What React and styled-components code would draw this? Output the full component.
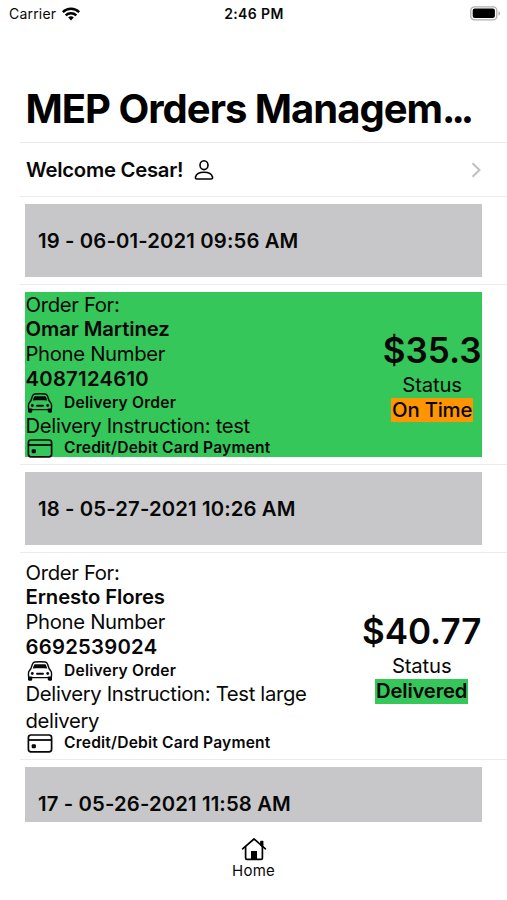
import styled, { createGlobalStyle } from 'styled-components';

const GlobalStyle = createGlobalStyle`
  * {
    box-sizing: border-box;
  }

  body {
    margin: 0;
    background-color: white;
  }

  p,
  h1,
  h2 {
    margin: 0;
  }
`;

const Screen = styled.div`
  width: 100%;
  height: 900px;
  overflow: hidden;

  display: flex;
  flex-direction: column;

  color: #080808;
  background-color: white;
  font-family: Inter, 'Liberation Sans', sans-serif;
  font-size: 20.3px;
  line-height: 24.9px;
`;

const StatusBar = styled.div`
  height: 27px;
  padding: 0 6px 0 9px;
  flex-shrink: 0;

  display: grid;
  grid-template-columns: 1fr auto 1fr;
  align-items: center;

  font-size: 14px;

  span {
    padding-top: 1px;
  }

  svg {
    display: block;
  }
`;

const Carrier = styled.div`
  display: flex;
  align-items: center;
  column-gap: 6px;

  letter-spacing: 0.2px;
`;

const Clock = styled.span`
  margin-right: 2px;

  font-weight: 600;
  letter-spacing: 0.4px;
`;

const Battery = styled.div`
  justify-self: end;
`;

const Title = styled.h1`
  height: 115px;
  padding: 57px 0 0 25.5px;
  flex-shrink: 0;

  color: black;
  font-size: 40px;
  font-weight: 700;
  line-height: 50px;
  letter-spacing: -1px;
  white-space: nowrap;

  span {
    letter-spacing: -4px;
  }
`;

const List = styled.main`
  flex: 1;
  min-height: 0;
  overflow: hidden;
  padding-left: 20px;
`;

const Row = styled.section`
  height: ${({ $height }) => $height}px;
  padding: 7px 25px 0 5px;
  border-top: 1px solid #ececee;
`;

const Welcome = styled.div`
  height: 40px;
  padding-left: 1px;

  display: flex;
  align-items: center;

  font-weight: 600;
  letter-spacing: -0.25px;

  svg:first-of-type {
    margin-left: 11px;
  }

  svg:last-of-type {
    margin-left: auto;
  }
`;

const OrderDate = styled.h2`
  height: 73px;
  padding: 2px 0 0 13px;

  display: flex;
  align-items: center;

  background-color: #c7c7c9;
  font-size: 20.3px;
  font-weight: 600;
  letter-spacing: 0.13px;
`;

const Order = styled.article`
  height: ${({ $height }) => $height}px;

  display: flex;
  justify-content: space-between;
  align-items: center;

  background-color: ${({ $highlight }) => ($highlight ? '#35c759' : 'white')};
`;

const Details = styled.div`
  width: 310px;
  padding: 0.5px 0 0 0.5px;
  align-self: flex-start;

  letter-spacing: -0.33px;

  strong {
    display: block;
    font-weight: 600;
    letter-spacing: -0.1px;
  }

  .details__phone {
    letter-spacing: 0.25px;
  }
`;

const Instruction = styled.p`
  margin-top: -1.5px;
  line-height: 27px;
`;

const Label = styled.div`
  height: ${({ $height }) => $height}px;

  display: flex;
  align-items: center;
  column-gap: 10.5px;

  font-size: 15.6px;
  font-weight: 600;
  line-height: 18px;
  letter-spacing: 0.2px;

  svg {
    flex-shrink: 0;
  }
`;

const Summary = styled.div`
  padding: 1px 0.5px 0 0;

  display: flex;
  flex-direction: column;
  align-items: center;
`;

const Price = styled.p`
  height: 45px;

  font-size: 35px;
  font-weight: 600;
  line-height: 45px;
`;

const Status = styled.span`
  letter-spacing: -0.15px;
`;

const Badge = styled.span`
  padding: 0 1px;

  background-color: ${({ $color }) => $color};
  font-weight: ${({ $weight }) => $weight};
  letter-spacing: -0.2px;
`;

const TabBar = styled.nav`
  height: 78px;
  flex-shrink: 0;
  padding-top: 15px;

  display: flex;
  flex-direction: column;
  align-items: center;

  font-size: 15px;
  line-height: 20px;
  letter-spacing: 0.25px;
`;

const WifiIcon = () => (
  <svg width="18" height="14" viewBox="0 0 18 14" fill="none" stroke="black" strokeWidth="2.5">
    <path d="M.8 5.1a11.8 11.8 0 0 1 16.4 0" />
    <path d="M3.7 8.4a7.7 7.7 0 0 1 10.6 0" />
    <path d="M9 13.4 6.2 10.6a4 4 0 0 1 5.6 0Z" fill="black" stroke="none" />
  </svg>
);

const BatteryIcon = () => (
  <svg width="31" height="15" viewBox="0 0 31 15">
    <rect x=".8" y=".8" width="26" height="13" rx="3.6" fill="none" stroke="#b0b0b0" strokeWidth="1.3" />
    <rect x="2.7" y="2.6" width="22.2" height="9.4" rx="2" fill="black" />
    <path d="M28.5 5.2c2.2.8 2.2 3.6 0 4.4Z" fill="#b0b0b0" />
  </svg>
);

const PersonIcon = () => (
  <svg width="20" height="20" viewBox="0 0 20 20" fill="none" stroke="black" strokeWidth="1.6">
    <ellipse cx="10" cy="5.2" rx="4" ry="4.4" />
    <path d="M3 19h14c1.4 0 1.8-.9 1.5-2-.7-2.6-4-4.8-8.5-4.8S2.2 14.4 1.5 17c-.3 1.1.1 2 1.5 2Z" />
  </svg>
);

const ChevronIcon = () => (
  <svg width="11" height="16" viewBox="0 0 11 16" fill="none" stroke="#bfbfc2" strokeWidth="2">
    <path d="m1.5 1.3 7 6.7-7 6.7" />
  </svg>
);

const CarIcon = () => (
  <svg width="28" height="20" viewBox="0 0 28 20" fill="none" stroke="currentColor" strokeWidth="1.4">
    <path d="M4.8 7.8 6.6 2.8C7 1.6 7.6 1.1 8.8 1c3.400-.3 7-.3 10.400 0 1.200.1 1.800.6 2.200 1.800l1.800 5 1.500 1.900c.6.700.8 1.300.8 2.200v3.300c0 .9-.5 1.400-1.400 1.400H3.900c-.9 0-1.400-.5-1.400-1.400v-3.300c0-.9.200-1.500.8-2.200Z" />
    <path d="m6.700 7.600 1.100-3.200c.3-.8.700-1.200 1.500-1.200h9.400c.8 0 1.200.4 1.500 1.200l1.100 3.200c-4.800-.5-9.800-.5-14.600 0Z" fill="currentColor" stroke="none" />
    <path d="M11 12.700h6" strokeWidth="1.900" strokeLinecap="round" />
    <path d="M2 15.500h4.200v3c0 .8-.4 1.200-1.100 1.200h-2c-.7 0-1.100-.4-1.100-1.200ZM21.800 15.500H26v3c0 .8-.4 1.200-1.100 1.200h-2c-.7 0-1.100-.4-1.100-1.200Z" fill="currentColor" stroke="none" />
    <circle cx="6.300" cy="12.500" r="1.400" fill="currentColor" stroke="none" />
    <circle cx="21.700" cy="12.500" r="1.400" fill="currentColor" stroke="none" />
  </svg>
);

const CardIcon = () => (
  <svg width="28" height="19" viewBox="0 0 28 19" fill="none" stroke="currentColor" strokeWidth="1.7">
    <rect x="2.4" y="1" width="23.2" height="16.8" rx="2.6" />
    <path d="M2.4 6h23.2" strokeWidth="1.8" />
    <rect x="5.7" y="10.2" width="4.2" height="4" rx="1" fill="currentColor" stroke="none" />
  </svg>
);

const HomeIcon = () => (
  <svg width="26" height="24" viewBox="0 0 26 24" fill="none" stroke="black" strokeWidth="1.7" strokeLinecap="round" strokeLinejoin="round">
    <path d="M1.6 11.8 13 2l11.4 9.8" />
    <path d="M4.6 10v11c0 .9.5 1.4 1.4 1.4h14c.9 0 1.4-.5 1.4-1.4V10" />
    <path d="M20 4.500h1.600v5L20 8.200Z" fill="black" />
    <path d="M10 22v-8h6v8Z" fill="black" stroke="none" />
  </svg>
);

const orders = [
  {
    date: '19 - 06-01-2021 09:56 AM',
    customer: 'Omar Martinez',
    phone: '4087124610',
    instruction: 'test',
    price: '$35.3',
    status: 'On Time',
    color: '#ff9500',
    weight: 500,
    highlight: true,
    height: 165,
  },
  {
    date: '18 - 05-27-2021 10:26 AM',
    customer: 'Ernesto Flores',
    phone: '6692539024',
    instruction: 'Test large delivery',
    price: '$40.77',
    status: 'Delivered',
    color: '#35c759',
    weight: 600,
    highlight: false,
    height: 192,
  },
];

const OrderRows = ({ order }) => {
  return (
    <>
      <Row $height={88}>
        <OrderDate>{order.date}</OrderDate>
      </Row>
      <Row $height={order.height + 15}>
        <Order $height={order.height} $highlight={order.highlight}>
          <Details>
            <p>Order For:</p>
            <strong>{order.customer}</strong>
            <p>Phone Number</p>
            <strong className="details__phone">{order.phone}</strong>
            <Label $height={21.5}>
              <CarIcon />
              <span>Delivery Order</span>
            </Label>
            <Instruction>{`Delivery Instruction: ${order.instruction}`}</Instruction>
            <Label $height={18}>
              <CardIcon />
              <span>Credit/Debit Card Payment</span>
            </Label>
          </Details>

          <Summary>
            <Price>{order.price}</Price>
            <Status>Status</Status>
            <Badge $color={order.color} $weight={order.weight}>
              {order.status}
            </Badge>
          </Summary>
        </Order>
      </Row>
    </>
  );
};

const App = () => {
  return (
    <Screen>
      <GlobalStyle />
      <StatusBar>
        <Carrier>
          <span>Carrier</span>
          <WifiIcon />
        </Carrier>
        <Clock>2:46 PM</Clock>
        <Battery>
          <BatteryIcon />
        </Battery>
      </StatusBar>

      <Title>
        MEP Orders Managem<span>...</span>
      </Title>

      <List>
        <Row $height={54}>
          <Welcome>
            <span>Welcome Cesar!</span>
            <PersonIcon />
            <ChevronIcon />
          </Welcome>
        </Row>
        {orders.map((order) => (
          <OrderRows key={order.date} order={order} />
        ))}
        <Row $height={88}>
          <OrderDate>17 - 05-26-2021 11:58 AM</OrderDate>
        </Row>
      </List>

      <TabBar>
        <HomeIcon />
        <span>Home</span>
      </TabBar>
    </Screen>
  );
};

export default App;
